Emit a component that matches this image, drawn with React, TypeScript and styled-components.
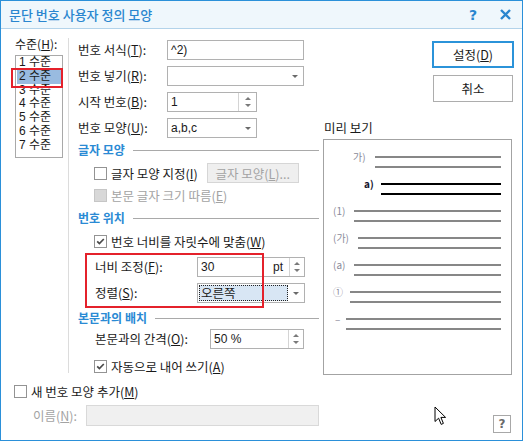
import React from 'react';
import styled, { createGlobalStyle } from 'styled-components';

const GlobalStyle = createGlobalStyle`
  html, body {
    margin: 0;
    padding: 0;
    background: #fff;
  }
  body {
    font-family: "Noto Sans CJK KR", "Noto Sans", sans-serif;
    font-size: 12.5px;
    color: #1a1a1a;
  }
  * {
    box-sizing: border-box;
  }
`;

const Window = styled.div`
  position: relative;
  width: 523px;
  height: 441px;
  border: 1px solid #2b90d9;
  background: #fff;
  display: flex;
  flex-direction: column;
`;

const TitleBar = styled.div`
  height: 28px;
  flex: none;
  display: flex;
  align-items: center;
  padding: 0 0 0 8px;
  background: #eff7fc;
  border-bottom: 1px solid #b3d3ea;
  color: #2a86cf;
`;

const Title = styled.div`
  flex: 1;
  font-size: 13px;
  font-weight: 500;
`;

const TitleButton = styled.div<{ $w: number }>`
  width: ${p => p.$w}px;
  height: 27px;
  display: flex;
  align-items: center;
  justify-content: center;
  font-family: "DejaVu Sans", sans-serif;
  font-weight: 700;
  font-size: 14px;
`;

const Body = styled.div`
  height: 349px;
  flex: none;
  display: flex;
`;

const LevelPane = styled.div`
  width: 67px;
  flex: none;
  padding: 8px 0 0 14px;
`;

const LevelLabel = styled.div`
  line-height: 14px;
  height: 14px;
  font-size: 12px;
  white-space: nowrap;
`;

const LevelList = styled.div`
  position: relative;
  margin-top: 4px;
  width: 48px;
  height: 103px;
  border: 1px solid #a9a9a9;
`;

const LevelItem = styled.div<{ $selected?: boolean }>`
  height: 13.8px;
  line-height: 13.8px;
  padding-left: 2px;
  margin: 0 1px;
  font-family: "Liberation Sans", "Noto Sans CJK KR", sans-serif;
  font-size: 12px;
  background: ${p => (p.$selected ? '#99bbe0' : 'transparent')};
  white-space: nowrap;
`;

const RedMark = styled.div<{ $l: number; $t: number; $w: number; $h: number }>`
  position: absolute;
  left: ${p => p.$l}px;
  top: ${p => p.$t}px;
  width: ${p => p.$w}px;
  height: ${p => p.$h}px;
  border: 2px solid #e4212b;
  pointer-events: none;
`;

const Divider = styled.div`
  width: 1px;
  flex: none;
  background: #dcdcdc;
  margin: 9px 0 5px;
`;

const FormPane = styled.div`
  width: 250px;
  flex: none;
  padding: 11px 0 0 9px;
  display: flex;
  flex-direction: column;
`;

const FieldGrid = styled.div<{ $label: number; $mt?: number; $indent?: number }>`
  display: grid;
  grid-template-columns: ${p => p.$label}px auto;
  row-gap: 6px;
  align-items: center;
  justify-items: start;
  margin-top: ${p => p.$mt ?? 0}px;
  padding-left: ${p => p.$indent ?? 0}px;
`;

const Label = styled.div`
  white-space: nowrap;
  line-height: 14px;
`;

const Field = styled.div<{ $w: number; $disabled?: boolean; $h?: number }>`
  width: ${p => p.$w}px;
  height: ${p => p.$h ?? 20}px;
  border: 1px solid ${p => (p.$disabled ? '#d9d9d9' : '#b1b1b1')};
  background: ${p => (p.$disabled ? '#f0f0f0' : '#fff')};
  display: flex;
  align-items: stretch;
`;

const FieldText = styled.div`
  flex: 1;
  padding-left: 3px;
  line-height: 18px;
  font-size: 12px;
  white-space: nowrap;
  font-family: "Liberation Sans", "Noto Sans CJK KR", sans-serif;
`;

const Unit = styled.div`
  padding-right: 6px;
  line-height: 18px;
  font-size: 12px;
  font-family: "Liberation Sans", sans-serif;
`;

const SelectedValue = styled.div`
  flex: 1;
  margin: 1px 0 1px 1px;
  padding-left: 1px;
  line-height: 14px;
  background: #d8e6f4;
  border: 1px dotted #222;
  white-space: nowrap;
`;

const DropArrow = styled.div`
  width: 16px;
  flex: none;
  display: flex;
  align-items: center;
  justify-content: center;
  &::after {
    content: '';
    border-left: 3px solid transparent;
    border-right: 3px solid transparent;
    border-top: 3px solid #6a6a6a;
  }
`;

const Spin = styled.div<{ $w: number }>`
  width: ${p => p.$w}px;
  flex: none;
  border-left: 1px solid #d4d4d4;
  display: flex;
  flex-direction: column;
  align-items: center;
  justify-content: center;
  gap: 4px;
  &::before {
    content: '';
    border-left: 3px solid transparent;
    border-right: 3px solid transparent;
    border-bottom: 3px solid #7a7a7a;
  }
  &::after {
    content: '';
    border-left: 3px solid transparent;
    border-right: 3px solid transparent;
    border-top: 3px solid #7a7a7a;
  }
`;

const Section = styled.div<{ $mt: number }>`
  display: flex;
  align-items: center;
  height: 14px;
  margin-top: ${p => p.$mt}px;
`;

const SectionTitle = styled.div`
  color: #2a8ad4;
  font-weight: 700;
  font-size: 12px;
  line-height: 14px;
  white-space: nowrap;
`;

const SectionLine = styled.div`
  flex: 1;
  height: 1px;
  margin-left: 8px;
  margin-top: 1px;
  background: #a9a9a9;
`;

const CheckRow = styled.div<{ $mt: number; $h?: number; $indent?: number; $disabled?: boolean }>`
  display: flex;
  align-items: center;
  gap: 4px;
  height: ${p => p.$h ?? 14}px;
  margin-top: ${p => p.$mt}px;
  padding-left: ${p => p.$indent ?? 16}px;
  color: ${p => (p.$disabled ? '#a3a3a3' : '#1a1a1a')};
  white-space: nowrap;
`;

const Box = styled.span<{ $disabled?: boolean }>`
  width: 13px;
  height: 13px;
  flex: none;
  border: 1px solid ${p => (p.$disabled ? '#c6c6c6' : '#939393')};
  background: ${p => (p.$disabled ? '#d8d8d8' : '#fff')};
  display: inline-flex;
  align-items: center;
  justify-content: center;
`;

const FlatButton = styled.div<{ $w: number; $ml?: number }>`
  width: ${p => p.$w}px;
  height: 20px;
  margin-left: ${p => p.$ml ?? 0}px;
  border: 1px solid #d6d6d6;
  background: #efefef;
  color: #a3a3a3;
  display: flex;
  align-items: center;
  justify-content: center;
`;

const PositionBlock = styled.div`
  position: relative;
  margin-top: 5px;
  padding: 4px 0;
`;

const SidePane = styled.div`
  flex: 1;
  display: flex;
  flex-direction: column;
  padding-top: 12px;
`;

const ButtonColumn = styled.div`
  display: flex;
  flex-direction: column;
  align-items: flex-end;
  padding-right: 8px;
  gap: 7px;
`;

const DialogButton = styled.div<{ $primary?: boolean }>`
  width: ${p => (p.$primary ? 82 : 80)}px;
  height: 27px;
  margin-right: ${p => (p.$primary ? 0 : 1)}px;
  border: ${p => (p.$primary ? '2px solid #2b93d9' : '1px solid #adadad')};
  background: #fff;
  display: flex;
  align-items: center;
  justify-content: center;
`;

const PreviewTitle = styled.div`
  margin: 19px 0 0 5px;
  line-height: 14px;
`;

const PreviewBox = styled.div`
  margin: 4px 0 0 4px;
  width: 189px;
  height: 236px;
  border: 1px solid #a3a3a3;
  padding: 11px 10px 0 0;
`;

const PreviewItem = styled.div<{ $indent: number }>`
  display: flex;
  height: 27px;
  padding-left: ${p => p.$indent}px;
`;

const PreviewLabel = styled.div<{ $w: number; $active?: boolean }>`
  width: ${p => p.$w}px;
  flex: none;
  font-size: 10px;
  line-height: 12px;
  font-weight: ${p => (p.$active ? 700 : 400)};
  color: ${p => (p.$active ? '#14142a' : '#8a8a9a')};
  white-space: nowrap;
`;

const PreviewLines = styled.div`
  flex: 1;
  display: flex;
  flex-direction: column;
  gap: 8px;
  padding-top: 5px;
`;

const PreviewLine = styled.div<{ $active?: boolean }>`
  height: 2px;
  background: ${p => (p.$active ? '#000' : '#878787')};
`;

const Footer = styled.div`
  flex: 1;
  display: flex;
  padding-left: 13px;
`;

const FooterMain = styled.div`
  flex: 1;
  display: flex;
  flex-direction: column;
`;

const NameRow = styled.div`
  display: flex;
  align-items: center;
  margin-top: 7px;
  padding-left: 19px;
  color: #a3a3a3;
`;

const NameLabel = styled.div`
  width: 53px;
  white-space: nowrap;
`;

const HelpButton = styled.div`
  align-self: flex-end;
  margin: 0 11px 7px 0;
  width: 18px;
  height: 18px;
  border: 1px solid #a8a8a8;
  display: flex;
  align-items: center;
  justify-content: center;
  font-family: "DejaVu Sans", sans-serif;
  font-weight: 700;
  font-size: 12px;
  color: #6a6a6a;
`;

const Cursor = styled.svg`
  position: absolute;
  left: 433px;
  top: 405px;
`;

const Check = () => (
  <svg width="9" height="9" viewBox="0 0 9 9">
    <polyline points="1.2,4.4 3.4,6.6 7.8,2" fill="none" stroke="#4a4a4a" strokeWidth="1.7" />
  </svg>
);

const previewItems = [
  { label: '가)', indent: 29, w: 22 },
  { label: 'a)', indent: 40, w: 17, active: true },
  { label: '(1)', indent: 9, w: 21 },
  { label: '(가)', indent: 9, w: 25 },
  { label: '(a)', indent: 9, w: 21 },
  { label: '①', indent: 9, w: 17 },
  { label: '–', indent: 11, w: 11 },
];

const levels = ['1 수준', '2 수준', '3 수준', '4 수준', '5 수준', '6 수준', '7 수준'];

export default function App() {
  return (
    <>
      <GlobalStyle />
      <Window>
        <TitleBar>
          <Title>문단 번호 사용자 정의 모양</Title>
          <TitleButton $w={30}>?</TitleButton>
          <TitleButton $w={34}>
            <svg width="11" height="11" viewBox="0 0 11 11">
              <path d="M1 1 L10 10 M10 1 L1 10" stroke="#2a86cf" strokeWidth="2.4" />
            </svg>
          </TitleButton>
        </TitleBar>

        <Body>
          <LevelPane>
            <LevelLabel>
              수준(<u>H</u>):
            </LevelLabel>
            <LevelList>
              {levels.map((l, i) => (
                <LevelItem key={l} $selected={i === 1}>
                  {l}
                </LevelItem>
              ))}
              <RedMark $l={-5} $t={12} $w={52} $h={20} />
            </LevelList>
          </LevelPane>

          <Divider />

          <FormPane>
            <FieldGrid $label={89}>
              <Label>
                번호 서식(<u>T</u>):
              </Label>
              <Field $w={137}>
                <FieldText>^2)</FieldText>
              </Field>
              <Label>
                번호 넣기(<u>R</u>):
              </Label>
              <Field $w={137}>
                <FieldText />
                <DropArrow />
              </Field>
              <Label>
                시작 번호(<u>B</u>):
              </Label>
              <Field $w={90}>
                <FieldText>1</FieldText>
                <Spin $w={18} />
              </Field>
              <Label>
                번호 모양(<u>U</u>):
              </Label>
              <Field $w={90}>
                <FieldText>a,b,c</FieldText>
                <DropArrow />
              </Field>
            </FieldGrid>

            <Section $mt={5}>
              <SectionTitle>글자 모양</SectionTitle>
              <SectionLine />
            </Section>
            <CheckRow $mt={6} $h={20}>
              <Box />
              <span>
                글자 모양 지정(<u>I</u>)
              </span>
              <FlatButton $w={92} $ml={5}>
                글자 모양(<u>L</u>)...
              </FlatButton>
            </CheckRow>
            <CheckRow $mt={5} $disabled>
              <Box $disabled />
              <span>
                본문 글자 크기 따름(<u>E</u>)
              </span>
            </CheckRow>

            <Section $mt={9}>
              <SectionTitle>번호 위치</SectionTitle>
              <SectionLine />
            </Section>
            <CheckRow $mt={9}>
              <Box>
                <Check />
              </Box>
              <span>
                번호 너비를 자릿수에 맞춤(<u>W</u>)
              </span>
            </CheckRow>
            <PositionBlock>
              <FieldGrid $label={102} $indent={17}>
                <Label>
                  너비 조정(<u>F</u>):
                </Label>
                <Field $w={108}>
                  <FieldText>30</FieldText>
                  <Unit>pt</Unit>
                  <Spin $w={15} />
                </Field>
                <Label>
                  정렬(<u>S</u>):
                </Label>
                <Field $w={108}>
                  <SelectedValue>오른쪽</SelectedValue>
                  <DropArrow />
                </Field>
              </FieldGrid>
              <RedMark $l={7} $t={0} $w={179} $h={55} />
            </PositionBlock>

            <Section $mt={4}>
              <SectionTitle>본문과의 배치</SectionTitle>
              <SectionLine />
            </Section>
            <FieldGrid $label={115} $indent={17} $mt={4}>
              <Label>
                본문과의 간격(<u>O</u>):
              </Label>
              <Field $w={94}>
                <FieldText>50 %</FieldText>
                <Spin $w={15} />
              </Field>
            </FieldGrid>
            <CheckRow $mt={10}>
              <Box>
                <Check />
              </Box>
              <span>
                자동으로 내어 쓰기(<u>A</u>)
              </span>
            </CheckRow>
          </FormPane>

          <SidePane>
            <ButtonColumn>
              <DialogButton $primary>
                설정(<u>D</u>)
              </DialogButton>
              <DialogButton>취소</DialogButton>
            </ButtonColumn>
            <PreviewTitle>미리 보기</PreviewTitle>
            <PreviewBox>
              {previewItems.map(item => (
                <PreviewItem key={item.label} $indent={item.indent}>
                  <PreviewLabel $w={item.w} $active={item.active}>
                    {item.label}
                  </PreviewLabel>
                  <PreviewLines>
                    <PreviewLine $active={item.active} />
                    <PreviewLine $active={item.active} />
                  </PreviewLines>
                </PreviewItem>
              ))}
            </PreviewBox>
          </SidePane>
        </Body>

        <Footer>
          <FooterMain>
            <CheckRow $mt={6} $indent={0}>
              <Box />
              <span>
                새 번호 모양 추가(<u>M</u>)
              </span>
            </CheckRow>
            <NameRow>
              <NameLabel>
                이름(<u>N</u>):
              </NameLabel>
              <Field $w={233} $h={21} $disabled />
            </NameRow>
          </FooterMain>
          <HelpButton>?</HelpButton>
        </Footer>

        <Cursor width="14" height="20" viewBox="0 0 14 20">
          <path
            d="M1 1 L1 15.5 L4.6 12.2 L7.2 18.4 L9.4 17.4 L6.9 11.4 L11.6 11.4 Z"
            fill="#fff"
            stroke="#000"
            strokeWidth="1"
          />
        </Cursor>
      </Window>
    </>
  );
}
